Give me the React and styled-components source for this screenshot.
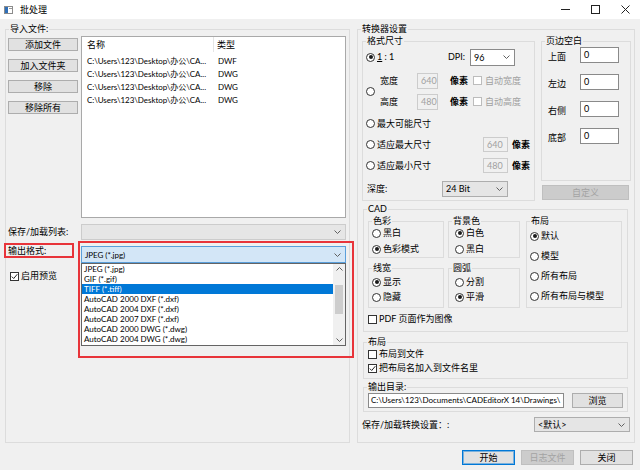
import React from "react";
import styled, { createGlobalStyle, css } from "styled-components";

const FONT = `"Lato", "Noto Sans CJK SC", sans-serif`;

const GlobalStyle = createGlobalStyle`
  html, body { margin: 0; padding: 0; background: #f0f0f0; }
  * { box-sizing: border-box; }
`;

const Window = styled.div`
  width: 640px;
  height: 470px;
  overflow: hidden;
  background: #f0f0f0;
  color: #000;
  font-family: ${FONT};
  font-size: 9px;
  line-height: 12px;
  display: flex;
  flex-direction: column;
`;

/* ---------- title bar ---------- */
const TitleBar = styled.div`
  height: 19px;
  flex: none;
  background: #fff;
  display: flex;
  align-items: center;
  padding-left: 4px;
`;
const TitleText = styled.span`
  margin-left: 7px;
`;
const WinControls = styled.div`
  margin-left: auto;
  display: flex;
  height: 100%;
`;
const WinBtn = styled.div`
  width: 30px;
  height: 100%;
  display: flex;
  align-items: center;
  justify-content: center;
`;

/* ---------- generic parts ---------- */
const Body = styled.div`
  display: flex;
  gap: 7px;
  padding: 4px 6px 0 5px;
`;

const Group = styled.fieldset`
  margin: 0;
  padding: 0;
  min-width: 0;
  flex: none;
  border: 1px solid #dcdcdc;
  width: ${(p) => p.$w}px;
  height: ${(p) => p.$h}px;
`;
const Legend = styled.legend`
  padding: 0 1px;
  margin-left: 3px;
  line-height: 12px;
  font-size: 9px;
`;

const Latin = styled.span`
  font-size: 8px;
  letter-spacing: -0.05px;
`;

const PushButton = styled.button`
  font: inherit;
  margin: 0;
  padding: 0;
  flex: none;
  width: ${(p) => p.$w}px;
  height: ${(p) => p.$h || 15}px;
  line-height: 11px;
  display: flex;
  align-items: center;
  justify-content: center;
  color: ${(p) => (p.disabled ? "#a3a3a3" : "#000")};
  background: ${(p) => (p.disabled ? "#cccccc" : "#e1e1e1")};
  border: 1px solid
    ${(p) => (p.$primary ? "#0078d7" : p.disabled ? "#bfbfbf" : "#adadad")};
  ${(p) =>
    p.$primary &&
    css`
      box-shadow: inset 0 0 0 1px rgba(0, 120, 215, 0.45);
    `}
`;

const TextBox = styled.div`
  flex: none;
  width: ${(p) => p.$w}px;
  height: ${(p) => p.$h || 16}px;
  border: 1px solid ${(p) => (p.$disabled ? "#cccccc" : "#8a8a8a")};
  background: ${(p) => (p.$disabled ? "#f0f0f0" : "#fff")};
  color: ${(p) => (p.$disabled ? "#a0a0a0" : "#000")};
  padding: ${(p) => (p.$top ? "1px 0 0 3px" : "0 0 0 3px")};
  display: flex;
  align-items: ${(p) => (p.$top ? "flex-start" : "center")};
  white-space: nowrap;
  overflow: hidden;
  line-height: 11px;
  ${(p) =>
    p.$small &&
    css`
      font-size: 8px;
      padding-left: 2px;
    `}
`;

const comboLook = {
  edit: { bg: "#ffffff", border: "#8a8a8a" },
  list: { bg: "#e5e5e5", border: "#adadad" },
  off: { bg: "#e6e6e6", border: "#cccccc" },
  focus: { bg: "#d3e6f7", border: "#5a9fdb" },
};
const ComboBox = styled.div`
  flex: none;
  width: ${(p) => p.$w}px;
  height: ${(p) => p.$h || 16}px;
  background: ${(p) => comboLook[p.$look].bg};
  border: 1px solid ${(p) => comboLook[p.$look].border};
  display: flex;
  align-items: center;
  justify-content: space-between;
  padding: 0 4px 0 3px;
  white-space: nowrap;
  line-height: 11px;
`;

const Chevron = ({ up }) => (
  <svg width="7" height="4" viewBox="0 0 7 4">
    <path
      d={up ? "M0.5 3.5 L3.5 0.5 L6.5 3.5" : "M0.5 0.5 L3.5 3.5 L6.5 0.5"}
      fill="none"
      stroke="#606060"
      strokeWidth="1"
    />
  </svg>
);

const Combo = ({ look, w, h, children }) => (
  <ComboBox $look={look} $w={w} $h={h}>
    <span>{children}</span>
    <Chevron />
  </ComboBox>
);

const Option = styled.div`
  display: flex;
  align-items: center;
  gap: ${(p) => (p.$gap != null ? p.$gap : 2)}px;
  height: 12px;
  white-space: nowrap;
  flex: none;
  color: ${(p) => (p.$disabled ? "#a0a0a0" : "#000")};
  ${(p) => p.$w && css`width: ${p.$w}px;`}
`;

const RadioMark = styled.span`
  flex: none;
  width: 9px;
  height: 9px;
  border-radius: 50%;
  border: 1px solid #333;
  background: #fff;
  display: flex;
  align-items: center;
  justify-content: center;
  ${(p) =>
    p.$on &&
    css`
      &::after {
        content: "";
        width: 4px;
        height: 4px;
        border-radius: 50%;
        background: #1a1a1a;
      }
    `}
`;

const CheckMark = styled.span`
  flex: none;
  width: 9px;
  height: 9px;
  border: 1px solid ${(p) => (p.$disabled ? "#bcbcbc" : "#333")};
  background: #fff;
  display: flex;
  align-items: center;
  justify-content: center;
`;

const Radio = ({ on, children, w, gap }) => (
  <Option $w={w} $gap={gap}>
    <RadioMark $on={on} />
    <span>{children}</span>
  </Option>
);

const Check = ({ on, disabled, children, gap }) => (
  <Option $disabled={disabled} $gap={gap}>
    <CheckMark $disabled={disabled}>
      {on && (
        <svg width="7" height="7" viewBox="0 0 7 7">
          <path d="M0.8 3.6 L2.7 5.5 L6.3 1.2" fill="none" stroke="#222" strokeWidth="1" />
        </svg>
      )}
    </CheckMark>
    <span>{children}</span>
  </Option>
);

/* ---------- left panel ---------- */
const FilesRow = styled.div`
  display: flex;
  gap: 3px;
  margin-top: 1px;
  padding-left: 2px;
`;
const ButtonColumn = styled.div`
  display: flex;
  flex-direction: column;
  gap: 8px;
  padding-top: 2px;
  width: 70px;
`;
const FileList = styled.div`
  width: 265px;
  height: 182px;
  background: #fff;
  border: 1px solid #a9a9a9;
`;
const ListHeader = styled.div`
  display: flex;
  height: 15px;
  align-items: center;
`;
const HeadCell = styled.div`
  width: ${(p) => p.$w || 0}px;
  flex: ${(p) => (p.$w ? "none" : "1")};
  padding-left: ${(p) => p.$pl}px;
  height: 100%;
  display: flex;
  align-items: center;
  ${(p) => p.$sep && css`border-right: 1px solid #e5e5e5;`}
`;
const ListBody = styled.div`
  padding-top: 2px;
`;
const ListRow = styled.div`
  display: flex;
  height: 13px;
  align-items: center;
`;
const Cell = styled.div`
  width: ${(p) => p.$w || 0}px;
  flex: ${(p) => (p.$w ? "none" : "1")};
  padding-left: ${(p) => p.$pl}px;
  white-space: nowrap;
  overflow: hidden;
  font-size: 8px;
  letter-spacing: -0.05px;
`;

const FieldRow = styled.div`
  display: flex;
  align-items: center;
  margin-top: ${(p) => p.$mt || 0}px;
  padding-left: 2px;
`;
const FieldLabel = styled.span`
  width: ${(p) => p.$w}px;
  flex: none;
  white-space: nowrap;
`;

const FormatRow = styled.div`
  display: flex;
  align-items: flex-start;
  margin-top: 1px;
`;
const LabelColumn = styled.div`
  width: 74px;
  margin-left: -2px;
  flex: none;
  display: flex;
  flex-direction: column;
`;
const MarkedLabel = styled.div`
  width: 70px;
  height: 15px;
  margin-top: 2px;
  border: 2px solid #e8343a;
  padding-left: 2px;
  line-height: 11px;
  white-space: nowrap;
`;
const PreviewCheck = styled.div`
  margin: 12px 0 0 6px;
`;
const MarkedBox = styled.div`
  flex: none;
  width: 276px;
  border: 2px solid #e8343a;
  padding: 3px 6px 10px 1px;
`;
const DropList = styled.div`
  width: 265px;
  height: 83px;
  border: 1px solid #646464;
  background: #fff;
  display: flex;
`;
const DropItems = styled.div`
  flex: 1;
  display: flex;
  flex-direction: column;
`;
const DropItem = styled.div`
  height: 10px;
  line-height: 10px;
  padding-left: 2px;
  font-size: 8px;
  white-space: nowrap;
  background: ${(p) => (p.$sel ? "#0078d7" : "transparent")};
  color: ${(p) => (p.$sel ? "#fff" : "#000")};
`;
const ScrollBar = styled.div`
  width: 12px;
  flex: none;
  background: #f0f0f0;
  display: flex;
  flex-direction: column;
  align-items: center;
`;
const ScrollArrow = styled.div`
  height: 10px;
  display: flex;
  align-items: center;
`;
const ScrollThumb = styled.div`
  width: 8px;
  height: 29px;
  margin-top: 11px;
  background: #cdcdcd;
`;
const ScrollRest = styled.div`
  flex: 1;
`;

/* ---------- right panel ---------- */
const TopRow = styled.div`
  display: flex;
  gap: 6px;
  padding-left: 4px;
  align-items: flex-start;
`;
const FormatContent = styled.div`
  display: flex;
  flex-direction: column;
  padding-left: 3px;
`;
const SizeRow = styled.div`
  display: flex;
  align-items: center;
  height: ${(p) => p.$h || 21}px;
  margin-top: ${(p) => p.$mt || 0}px;
`;
const SizeBlock = styled.div`
  display: flex;
  align-items: center;
  margin-top: 3px;
`;
const BlockRows = styled.div`
  display: flex;
  flex-direction: column;
  margin-left: 5px;
`;
const Text = styled.span`
  flex: none;
  white-space: nowrap;
  ${(p) => p.$w && css`width: ${p.$w}px;`}
  margin-left: ${(p) => p.$ml || 0}px;
  color: ${(p) => (p.$disabled ? "#a0a0a0" : "#000")};
`;
const Unit = styled(Text)`
  font-weight: 600;
`;

const MarginColumn = styled.div`
  display: flex;
  flex-direction: column;
`;
const MarginRows = styled.div`
  display: flex;
  flex-direction: column;
  padding-left: 6px;
`;
const MarginRow = styled.div`
  display: flex;
  align-items: flex-start;
  height: 27px;
`;
const MarginLabel = styled.span`
  width: 32px;
  flex: none;
  margin-top: 4px;
`;
const CustomSlot = styled.div`
  margin: 4px 0 0 1px;
`;

const CadGroup = styled(Group)`
  margin: ${(p) => p.$mt}px 0 0 5px;
`;
const CadGrid = styled.div`
  display: grid;
  grid-template-columns: 76px 72px 98px;
  grid-template-rows: 43px 46px;
  column-gap: 4px;
  row-gap: 4px;
  margin-left: 4px;
`;
const SubGroup = styled.fieldset`
  margin: 0;
  padding: 0;
  min-width: 0;
  border: 1px solid #dcdcdc;
  ${(p) =>
    p.$span &&
    css`
      grid-row: 1 / span 2;
      grid-column: 3;
      margin-left: 2px;
    `}
`;
const OptionStack = styled.div`
  display: flex;
  flex-direction: column;
  gap: ${(p) => p.$gap}px;
  padding: ${(p) => p.$pt}px 0 0 ${(p) => p.$pl}px;
`;
const CheckRow = styled.div`
  margin: ${(p) => p.$mt || 0}px 0 0 4px;
`;
const CheckRows = styled.div`
  display: flex;
  flex-direction: column;
  gap: 2px;
  margin-left: 4px;
`;
const DirRow = styled.div`
  display: flex;
  gap: 8px;
  margin-left: 4px;
`;
const SaveSettingsRow = styled.div`
  display: flex;
  align-items: center;
  justify-content: space-between;
  margin-top: 5px;
  padding: 0 4px 0 4px;
`;

const BottomBar = styled.div`
  display: flex;
  justify-content: flex-end;
  gap: 6px;
  padding-right: 7px;
  margin-top: 7px;
`;

const files = [
  ["C:\\Users\\123\\Desktop\\办公\\CA...", "DWF"],
  ["C:\\Users\\123\\Desktop\\办公\\CA...", "DWG"],
  ["C:\\Users\\123\\Desktop\\办公\\CA...", "DWG"],
  ["C:\\Users\\123\\Desktop\\办公\\CA...", "DWG"],
];
const formats = [
  "JPEG (*.jpg)",
  "GIF (*.gif)",
  "TIFF (*.tiff)",
  "AutoCAD 2000 DXF (*.dxf)",
  "AutoCAD 2004 DXF (*.dxf)",
  "AutoCAD 2007 DXF (*.dxf)",
  "AutoCAD 2000 DWG (*.dwg)",
  "AutoCAD 2004 DWG (*.dwg)",
];

const SubBox = ({ title, pl, pt, gap, span, children }) => (
  <SubGroup $span={span}>
    <Legend>{title}</Legend>
    <OptionStack $pl={pl} $pt={pt} $gap={gap}>
      {children}
    </OptionStack>
  </SubGroup>
);

export default function App() {
  return (
    <Window>
      <GlobalStyle />
      <TitleBar>
        <svg width="9" height="8" viewBox="0 0 9 8">
          <rect x="0.5" y="0.5" width="8" height="7" fill="#fff" stroke="#8c8c8c" />
          <rect x="1" y="1" width="3" height="6" fill="#2f6fb8" />
          <rect x="5" y="2" width="3" height="1" fill="#9a9a9a" />
        </svg>
        <TitleText>批处理</TitleText>
        <WinControls>
          <WinBtn>
            <svg width="9" height="9" viewBox="0 0 9 9">
              <path d="M0 4.5 H9" stroke="#222" strokeWidth="1" />
            </svg>
          </WinBtn>
          <WinBtn>
            <svg width="9" height="9" viewBox="0 0 9 9">
              <rect x="0.5" y="0.5" width="8" height="8" fill="none" stroke="#222" />
            </svg>
          </WinBtn>
          <WinBtn>
            <svg width="9" height="9" viewBox="0 0 9 9">
              <path d="M0.5 0.5 L8.5 8.5 M8.5 0.5 L0.5 8.5" stroke="#222" strokeWidth="1" />
            </svg>
          </WinBtn>
        </WinControls>
      </TitleBar>

      <Body>
        {/* left: import files */}
        <Group $w={345} $h={420}>
          <Legend>导入文件:</Legend>
          <FilesRow>
            <ButtonColumn>
              <PushButton $w={70} $h={13}>添加文件</PushButton>
              <PushButton $w={70} $h={13}>加入文件夹</PushButton>
              <PushButton $w={70} $h={13}>移除</PushButton>
              <PushButton $w={70} $h={13}>移除所有</PushButton>
            </ButtonColumn>
            <FileList>
              <ListHeader>
                <HeadCell $w={132} $pl={5} $sep>名称</HeadCell>
                <HeadCell $pl={3}>类型</HeadCell>
              </ListHeader>
              <ListBody>
                {files.map(([name, type], i) => (
                  <ListRow key={i}>
                    <Cell $w={132} $pl={5}>{name}</Cell>
                    <Cell $pl={4}>{type}</Cell>
                  </ListRow>
                ))}
              </ListBody>
            </FileList>
          </FilesRow>

          <FieldRow $mt={6}>
            <FieldLabel $w={73}>保存/加载列表:</FieldLabel>
            <Combo look="off" w={265} h={16}></Combo>
          </FieldRow>

          <FormatRow>
            <LabelColumn>
              <MarkedLabel>输出格式:</MarkedLabel>
              <PreviewCheck>
                <Check on>启用预览</Check>
              </PreviewCheck>
            </LabelColumn>
            <MarkedBox>
              <Combo look="focus" w={265} h={17}>
                <Latin>JPEG (*.jpg)</Latin>
              </Combo>
              <DropList>
                <DropItems>
                  {formats.map((f, i) => (
                    <DropItem key={f} $sel={i === 2}>{f}</DropItem>
                  ))}
                </DropItems>
                <ScrollBar>
                  <ScrollArrow><Chevron up /></ScrollArrow>
                  <ScrollThumb />
                  <ScrollRest />
                  <ScrollArrow><Chevron /></ScrollArrow>
                </ScrollBar>
              </DropList>
            </MarkedBox>
          </FormatRow>
        </Group>

        {/* right: converter settings */}
        <Group $w={278} $h={420}>
          <Legend>转换器设置</Legend>
          <TopRow>
            <Group $w={173} $h={166}>
              <Legend>格式尺寸</Legend>
              <FormatContent>
                <SizeRow $h={20}>
                  <Radio on w={82}>
                    <u>1</u> : 1
                  </Radio>
                  <Text $w={22}>DPI:</Text>
                  <Combo look="edit" w={45} h={17}>96</Combo>
                </SizeRow>
                <SizeBlock>
                  <RadioMark />
                  <BlockRows>
                    <SizeRow>
                      <Text $w={37}>宽度</Text>
                      <TextBox $w={21} $disabled>640</TextBox>
                      <Unit $w={23} $ml={12}>像素</Unit>
                      <Check disabled gap={3}>自动宽度</Check>
                    </SizeRow>
                    <SizeRow>
                      <Text $w={37}>高度</Text>
                      <TextBox $w={21} $disabled>480</TextBox>
                      <Unit $w={23} $ml={12}>像素</Unit>
                      <Check disabled gap={3}>自动高度</Check>
                    </SizeRow>
                  </BlockRows>
                </SizeBlock>
                <SizeRow $mt={1}>
                  <Radio>最大可能尺寸</Radio>
                </SizeRow>
                <SizeRow>
                  <Radio w={117}>适应最大尺寸</Radio>
                  <TextBox $w={25} $h={15} $disabled>640</TextBox>
                  <Unit $ml={4}>像素</Unit>
                </SizeRow>
                <SizeRow>
                  <Radio w={117}>适应最小尺寸</Radio>
                  <TextBox $w={25} $h={15} $disabled>480</TextBox>
                  <Unit $ml={4}>像素</Unit>
                </SizeRow>
                <SizeRow $mt={2}>
                  <Text $w={75} $ml={1}>深度:</Text>
                  <Combo look="list" w={66} h={16}>24 Bit</Combo>
                </SizeRow>
              </FormatContent>
            </Group>

            <MarginColumn>
              <Group $w={90} $h={146}>
                <Legend>页边空白</Legend>
                <MarginRows>
                  {["上面", "左边", "右侧", "底部"].map((l) => (
                    <MarginRow key={l}>
                      <MarginLabel>{l}</MarginLabel>
                      <TextBox $w={39} $h={16} $top>0</TextBox>
                    </MarginRow>
                  ))}
                </MarginRows>
              </Group>
              <CustomSlot>
                <PushButton $w={87} $h={15} disabled>自定义</PushButton>
              </CustomSlot>
            </MarginColumn>
          </TopRow>

          <CadGroup $w={265} $h={129} $mt={2}>
            <Legend>CAD</Legend>
            <CadGrid>
              <SubBox title="色彩" pl={3} pt={0} gap={4}>
                <Radio>黑白</Radio>
                <Radio on>色彩模式</Radio>
              </SubBox>
              <SubBox title="背景色" pl={6} pt={0} gap={4}>
                <Radio on>白色</Radio>
                <Radio>黑白</Radio>
              </SubBox>
              <SubBox title="布局" pl={3} pt={3} gap={8} span>
                <Radio on>默认</Radio>
                <Radio>模型</Radio>
                <Radio>所有布局</Radio>
                <Radio>所有布局与模型</Radio>
              </SubBox>
              <SubBox title="线宽" pl={3} pt={2} gap={3}>
                <Radio on>显示</Radio>
                <Radio>隐藏</Radio>
              </SubBox>
              <SubBox title="圆弧" pl={6} pt={2} gap={3}>
                <Radio>分割</Radio>
                <Radio on>平滑</Radio>
              </SubBox>
            </CadGrid>
            <CheckRow $mt={5}>
              <Check>PDF 页面作为图像</Check>
            </CheckRow>
          </CadGroup>

          <CadGroup $w={265} $h={43} $mt={4}>
            <Legend>布局</Legend>
            <CheckRows>
              <Check>布局到文件</Check>
              <Check on>把布局名加入到文件名里</Check>
            </CheckRows>
          </CadGroup>

          <CadGroup $w={265} $h={31} $mt={2}>
            <Legend>输出目录:</Legend>
            <DirRow>
              <TextBox $w={196} $h={15} $small>
                C:\Users\123\Documents\CADEditorX 14\Drawings\
              </TextBox>
              <PushButton $w={51} $h={15}>浏览</PushButton>
            </DirRow>
          </CadGroup>

          <SaveSettingsRow>
            <span>保存/加载转换设置：:</span>
            <Combo look="list" w={96} h={15}>&lt;默认&gt;</Combo>
          </SaveSettingsRow>
        </Group>
      </Body>

      <BottomBar>
        <PushButton $w={53} $h={15} $primary>开始</PushButton>
        <PushButton $w={53} $h={15} disabled>日志文件</PushButton>
        <PushButton $w={53} $h={15}>关闭</PushButton>
      </BottomBar>
    </Window>
  );
}
